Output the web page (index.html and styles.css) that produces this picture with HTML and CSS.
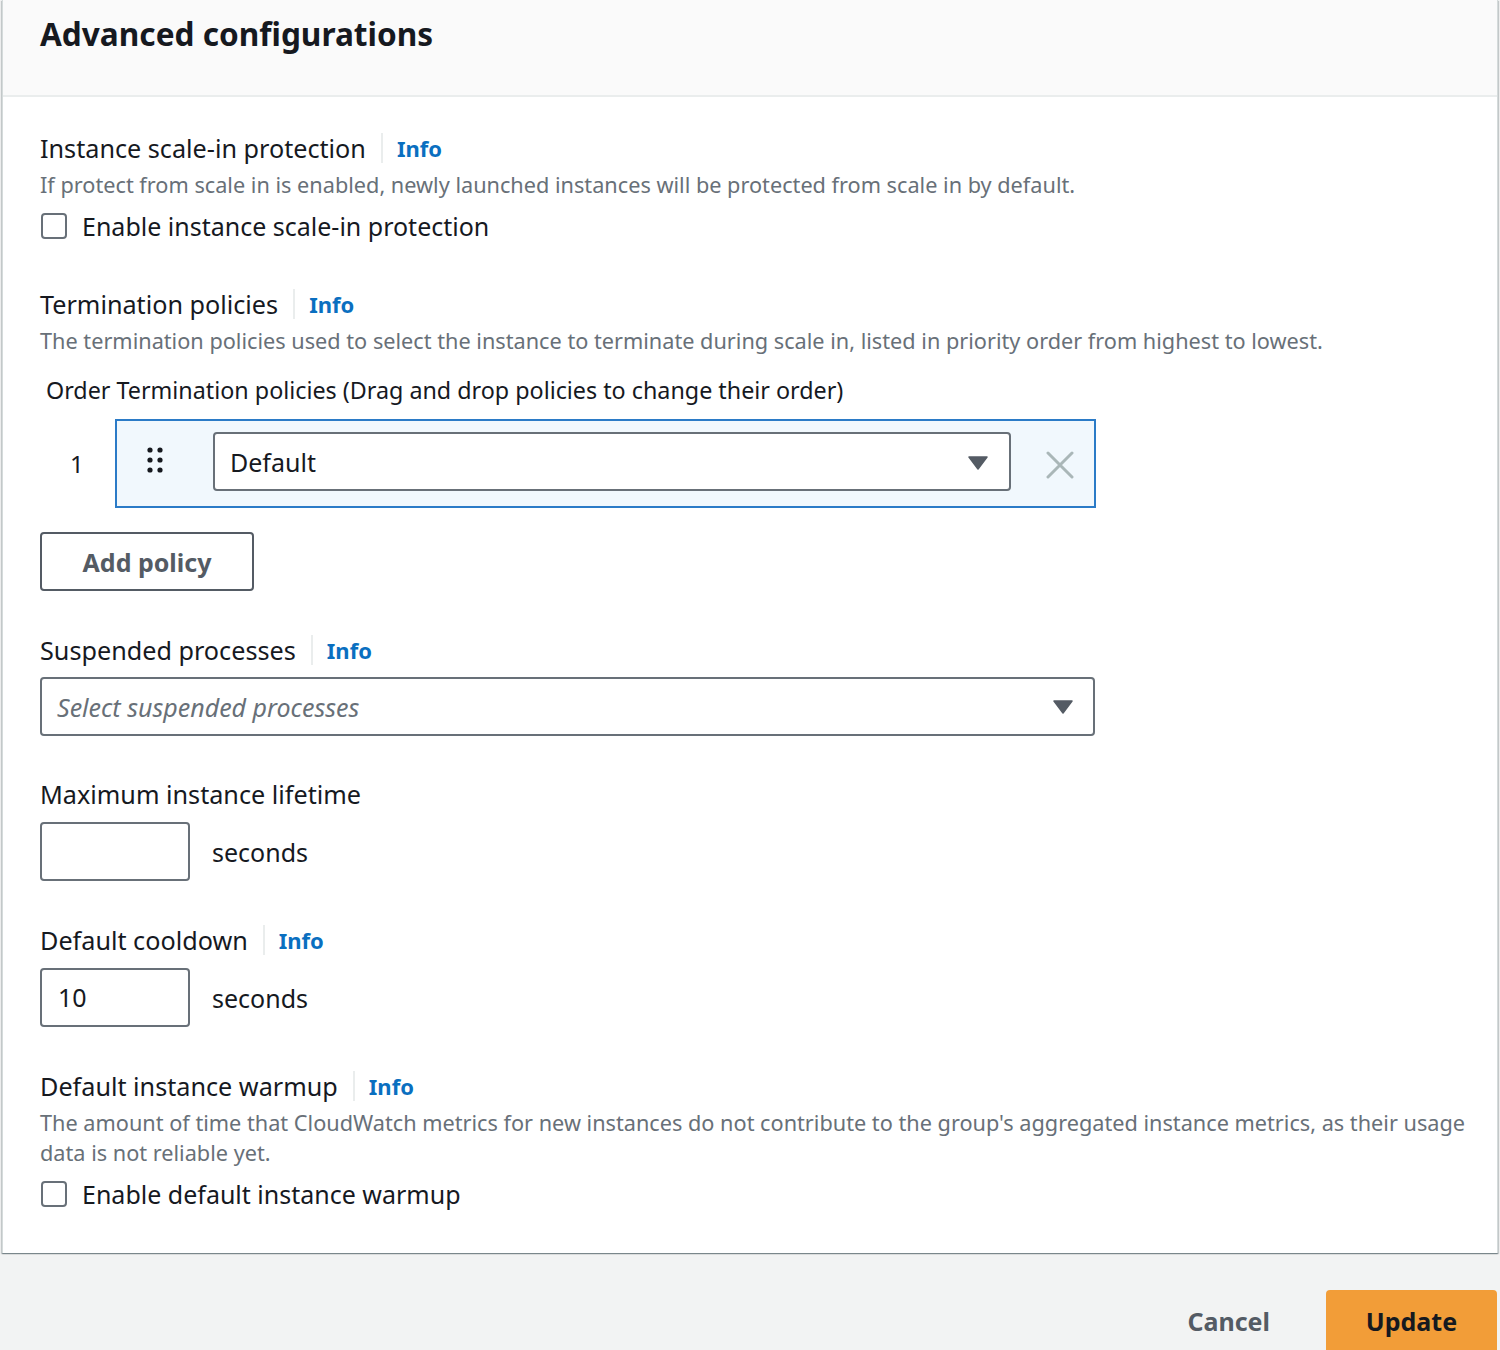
FILE: index.html
```html
<!DOCTYPE html>
<html lang="en">
<head>
<meta charset="utf-8">
<title>Advanced configurations</title>
<link rel="stylesheet" href="styles.css">
</head>
<body>
<div class="card">
  <div class="card-header"><h2 class="title">Advanced configurations</h2></div>
  <div class="card-body">
    <div class="field f-first">
      <div class="label-row"><span class="label">Instance scale-in protection</span><span class="sep"></span><a class="info">Info</a></div>
      <div class="desc">If protect from scale in is enabled, newly launched instances will be protected from scale in by default.</div>
      <label class="check-row"><span class="checkbox"></span><span class="check-label">Enable instance scale-in protection</span></label>
    </div>

    <div class="field f-term">
      <div class="label-row"><span class="label">Termination policies</span><span class="sep"></span><a class="info">Info</a></div>
      <div class="desc">The termination policies used to select the instance to terminate during scale in, listed in priority order from highest to lowest.</div>
      <div class="order-label">Order Termination policies (Drag and drop policies to change their order)</div>
      <div class="policy-line">
        <div class="policy-num">1</div>
        <div class="policy-box">
          <div class="drag">
            <svg width="16" height="26" viewBox="0 0 16 26"><circle cx="3" cy="3" r="2.6" fill="#16191f"/><circle cx="13" cy="3" r="2.6" fill="#16191f"/><circle cx="3" cy="13" r="2.6" fill="#16191f"/><circle cx="13" cy="13" r="2.6" fill="#16191f"/><circle cx="3" cy="23" r="2.6" fill="#16191f"/><circle cx="13" cy="23" r="2.6" fill="#16191f"/></svg>
          </div>
          <div class="select sel-policy"><span class="sel-text">Default</span>
            <svg class="caret" width="20" height="14" viewBox="0 0 20 14"><path d="M1 1 H19 L10 13 Z" fill="#545b64" stroke="#545b64" stroke-width="1.5" stroke-linejoin="round"/></svg>
          </div>
          <div class="remove">
            <svg width="28" height="28" viewBox="0 0 28 28"><path d="M2 2 L26 26 M26 2 L2 26" stroke="#aab7b8" stroke-width="3" stroke-linecap="round"/></svg>
          </div>
        </div>
      </div>
      <button class="btn-normal">Add policy</button>
    </div>

    <div class="field f-gap">
      <div class="label-row"><span class="label">Suspended processes</span><span class="sep"></span><a class="info">Info</a></div>
      <div class="select sel-wide"><span class="placeholder">Select suspended processes</span>
        <svg class="caret" width="20" height="14" viewBox="0 0 20 14"><path d="M1 1 H19 L10 13 Z" fill="#545b64" stroke="#545b64" stroke-width="1.5" stroke-linejoin="round"/></svg>
      </div>
    </div>

    <div class="field f-gap f-max">
      <div class="label-row"><span class="label">Maximum instance lifetime</span></div>
      <div class="input-row"><div class="input"></div><span class="unit">seconds</span></div>
    </div>

    <div class="field f-gap">
      <div class="label-row"><span class="label">Default cooldown</span><span class="sep"></span><a class="info">Info</a></div>
      <div class="input-row"><div class="input">10</div><span class="unit">seconds</span></div>
    </div>

    <div class="field f-gap">
      <div class="label-row"><span class="label">Default instance warmup</span><span class="sep"></span><a class="info">Info</a></div>
      <div class="desc">The amount of time that CloudWatch metrics for new instances do not contribute to the group's aggregated instance metrics, as their usage data is not reliable yet.</div>
      <label class="check-row"><span class="checkbox"></span><span class="check-label">Enable default instance warmup</span></label>
    </div>
  </div>
</div>
<div class="footer">
  <button class="btn-link">Cancel</button>
  <button class="btn-primary">Update</button>
</div>
</body>
</html>
```

FILE: styles.css
```css
* { box-sizing: border-box; }
html, body { margin: 0; padding: 0; }
body {
  background: #f2f3f3;
  font-family: "Noto Sans", "Open Sans", sans-serif;
  color: #16191f;
  width: 1500px;
  height: 1350px;
  overflow: hidden;
}
.card {
  margin: 0 2px;
  background: #ffffff;
  border-left: 1px solid #d5dbdb;
  border-right: 1px solid #d5dbdb;
  box-shadow: 0 1px 1px 0 rgba(0,28,36,0.3), 1px 1px 1px 0 rgba(0,28,36,0.15), -1px 1px 1px 0 rgba(0,28,36,0.15);
}
.card-header {
  height: 97px;
  background: #fafafa;
  border-bottom: 2px solid #eaeded;
  padding-left: 37px;
}
.title {
  margin: 0;
  padding-top: 12px;
  font-size: 31.6px;
  line-height: 44px;
  font-weight: 700;
  color: #16191f;
}
.card-body {
  padding: 34px 16px 42px 37px;
}
.field.f-term { margin-top: 44px; }
.field.f-gap { margin-top: 42px; }
.field.f-max { margin-top: 41px; }
.label-row {
  display: flex;
  align-items: center;
  height: 34px;
}
.label {
  font-size: 25.2px;
  line-height: 34px;
  color: #16191f;
}
.sep {
  width: 2px;
  height: 30px;
  background: #eaeded;
  margin: 0 14px 0 15px;
}
.info {
  font-size: 22px;
  font-weight: 700;
  color: #0a6fc0;
}
.desc {
  margin-top: 5px;
  font-size: 21.7px;
  line-height: 30px;
  color: #687078;
}
.check-row {
  display: flex;
  align-items: center;
  height: 34px;
  margin-top: 9px;
}
.checkbox {
  width: 26px;
  height: 26px;
  border: 2px solid #687078;
  border-radius: 4px;
  margin-left: 1px;
  background: #fff;
}
.check-label {
  margin-left: 15px;
  font-size: 25px;
  color: #16191f;
}
.order-label {
  margin-top: 17px;
  padding-left: 6px;
  font-size: 23.3px;
  line-height: 34px;
}
.policy-line {
  display: flex;
  align-items: center;
  margin-top: 12px;
}
.policy-num {
  width: 75px;
  padding-left: 30px;
  font-size: 24px;
}
.policy-box {
  width: 981px;
  height: 89px;
  background: #f1f8fd;
  border: 2px solid #2b7bc7;
  display: flex;
  align-items: center;
}
.drag {
  width: 96px;
  padding-left: 30px;
  display: flex;
  align-items: center;
  margin-top: -8px;
}
.select {
  position: relative;
  height: 59px;
  border: 2px solid #687078;
  border-radius: 4px;
  background: #fff;
  display: flex;
  align-items: center;
  padding-left: 15px;
}
.sel-policy { width: 798px; margin-top: -4px; }
.sel-text { font-size: 25px; color: #16191f; }
.caret { position: absolute; right: 21px; top: 22px; }
.remove {
  flex: 1;
  display: flex;
  justify-content: center;
  padding-top: 2px;
  padding-left: 14px;
}
.sel-wide { width: 1055px; margin-top: 10px; }
.sel-wide .caret { top: 21px; right: 20px; }
.placeholder {
  font-size: 25px;
  font-style: italic;
  color: #687078;
}
.btn-normal {
  display: block;
  margin-top: 24px;
  width: 214px;
  height: 59px;
  border: 2px solid #545b64;
  border-radius: 4px;
  background: #fff;
  font-family: inherit;
  font-size: 25px;
  font-weight: 700;
  color: #545b64;
  padding: 0;
}
.input-row {
  display: flex;
  align-items: center;
  margin-top: 11px;
}
.input {
  width: 150px;
  height: 59px;
  border: 2px solid #687078;
  border-radius: 4px;
  background: #fff;
  padding-left: 16px;
  font-size: 25px;
  line-height: 55px;
}
.unit {
  margin-left: 22px;
  font-size: 25px;
}
.footer {
  display: flex;
  justify-content: flex-end;
  align-items: flex-start;
  margin-top: 37px;
  padding-right: 3px;
}
.btn-link {
  border: none;
  background: transparent;
  font-family: inherit;
  font-size: 25px;
  font-weight: 700;
  color: #545b64;
  height: 62px;
  padding: 0;
  margin-right: 56px;
}
.btn-primary {
  width: 171px;
  height: 64px;
  border: none;
  border-radius: 4px;
  background: #f29d38;
  font-family: inherit;
  font-size: 25px;
  font-weight: 700;
  color: #16191f;
  padding: 0 0 2px;
}
```
